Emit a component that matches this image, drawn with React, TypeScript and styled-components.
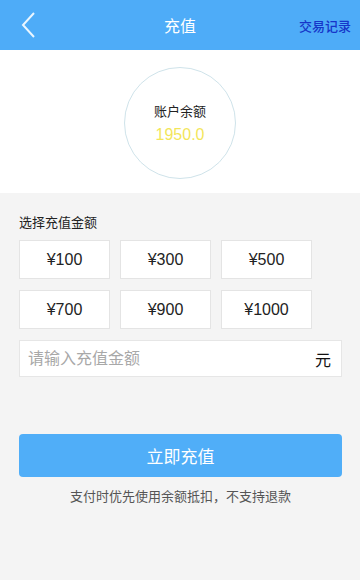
import React from 'react';
import styled, { createGlobalStyle } from 'styled-components';

const GlobalStyle = createGlobalStyle`
  html, body {
    margin: 0;
    padding: 0;
    background: #f4f4f4;
    font-family: "Liberation Sans", "Noto Sans CJK SC", sans-serif;
  }
  * { box-sizing: border-box; }
`;

const Page = styled.div`
  width: 360px;
  min-height: 580px;
  display: flex;
  flex-direction: column;
  background: #f4f4f4;
`;

const Header = styled.div`
  height: 50px;
  background: #4eacf8;
  display: grid;
  grid-template-columns: 80px 1fr 80px;
  align-items: center;
`;

const BackButton = styled.div`
  padding-left: 20px;
  display: flex;
  align-items: center;
`;

const Title = styled.div`
  text-align: center;
  color: #ffffff;
  font-size: 16px;
`;

const RecordLink = styled.div`
  text-align: right;
  padding-right: 9px;
  color: #1636c9;
  font-size: 13px;
  font-weight: 500;
`;

const BalanceSection = styled.div`
  background: #ffffff;
  height: 143px;
  display: flex;
  align-items: center;
  justify-content: center;
`;

const Circle = styled.div`
  width: 112px;
  height: 112px;
  border-radius: 50%;
  border: 1px solid #cfe3ea;
  display: flex;
  flex-direction: column;
  align-items: center;
  justify-content: center;
  gap: 6px;
  margin-top: 2px;
`;

const BalanceLabel = styled.div`
  font-size: 13px;
  color: #222;
`;

const BalanceValue = styled.div`
  font-size: 16px;
  color: #f3e65a;
`;

const Panel = styled.div`
  flex: 1;
  padding: 19px 18px 40px 19px;
  display: flex;
  flex-direction: column;
`;

const SectionLabel = styled.div`
  font-size: 13px;
  color: #222;
  margin-bottom: 9px;
`;

const AmountGrid = styled.div`
  display: grid;
  grid-template-columns: repeat(3, 91px);
  column-gap: 10px;
  row-gap: 11px;
`;

const AmountButton = styled.div`
  height: 39px;
  background: #fff;
  border: 1px solid #e4e4e4;
  display: flex;
  align-items: center;
  justify-content: center;
  font-size: 16px;
  color: #222;
`;

const InputRow = styled.div`
  margin-top: 11px;
  height: 37px;
  background: #fff;
  border: 1px solid #e6e6e6;
  display: flex;
  align-items: center;
  padding: 0 10px 0 8px;
`;

const AmountInput = styled.input`
  flex: 1;
  border: none;
  outline: none;
  background: transparent;
  font-family: inherit;
  font-size: 16px;
  color: #222;
  padding: 0;
  &::placeholder { color: #a8a8a8; }
`;

const Unit = styled.span`
  font-size: 16px;
  color: #111;
`;

const SubmitButton = styled.button`
  margin-top: 57px;
  height: 43px;
  border: none;
  border-radius: 4px;
  background: #50aef8;
  color: #fff;
  font-family: inherit;
  font-size: 17px;
  width: 100%;
`;

const Note = styled.div`
  margin-top: 9px;
  text-align: center;
  font-size: 13px;
  color: #555;
`;

const amounts = ['¥100', '¥300', '¥500', '¥700', '¥900', '¥1000'];

export default function App() {
  return (
    <Page>
      <GlobalStyle />
      <Header>
        <BackButton>
          <svg width="16" height="28" viewBox="0 0 16 28">
            <polyline points="14,2 3,14 14,26" fill="none" stroke="#eaf6ff" strokeWidth="2" />
          </svg>
        </BackButton>
        <Title>充值</Title>
        <RecordLink>交易记录</RecordLink>
      </Header>
      <BalanceSection>
        <Circle>
          <BalanceLabel>账户余额</BalanceLabel>
          <BalanceValue>1950.0</BalanceValue>
        </Circle>
      </BalanceSection>
      <Panel>
        <SectionLabel>选择充值金额</SectionLabel>
        <AmountGrid>
          {amounts.map((a) => (
            <AmountButton key={a}>{a}</AmountButton>
          ))}
        </AmountGrid>
        <InputRow>
          <AmountInput placeholder="请输入充值金额" />
          <Unit>元</Unit>
        </InputRow>
        <SubmitButton>立即充值</SubmitButton>
        <Note>支付时优先使用余额抵扣，不支持退款</Note>
      </Panel>
    </Page>
  );
}
